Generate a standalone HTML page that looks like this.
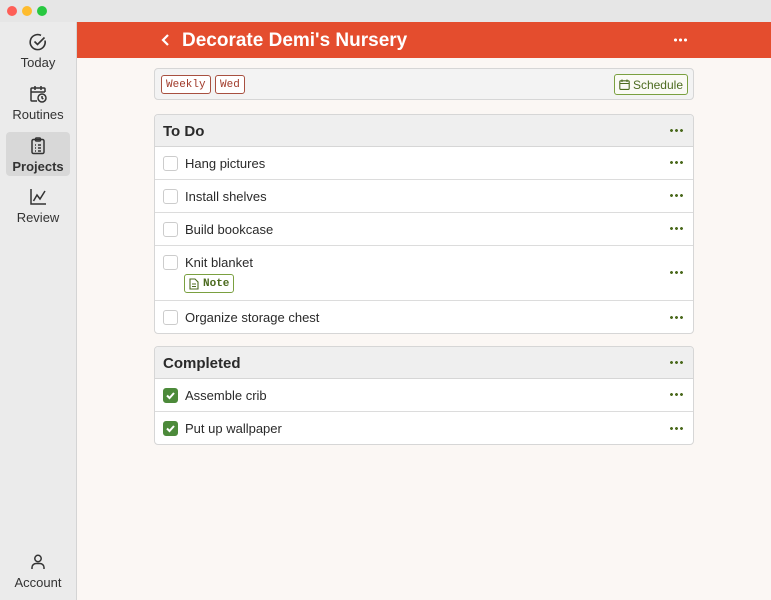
<!DOCTYPE html>
<html><head><meta charset="utf-8"><style>
*{box-sizing:border-box;margin:0;padding:0}
body{width:771px;height:600px;overflow:hidden;font-family:"Liberation Sans",sans-serif;background:#fbf7f4;position:relative;color:#2a2a2a}
.tb{position:absolute;left:0;top:0;width:771px;height:22px;background:#e6e6e6}
.dot{position:absolute;top:6px;width:10px;height:10px;border-radius:50%}
.side{position:absolute;left:0;top:22px;width:77px;height:578px;background:#ebebeb;border-right:1px solid #d4d4d4}
.nav{position:absolute;left:6px;width:64px;height:45px;text-align:center;font-size:13px;color:#333}
.nav svg{display:block;margin:0 auto 3px}
.hdr{position:absolute;left:77px;top:22px;width:694px;height:36px;background:#e44d2e;color:#fff}
.card{position:absolute;left:154px;width:540px;border:1px solid #d6d6d6;border-radius:4px;background:#fff;overflow:hidden}
.ch{height:32px;background:#efefef;border-bottom:1px solid #d6d6d6;font-weight:bold;font-size:15px;padding:8px 0 0 8px;position:relative}
.row{height:33px;border-bottom:1px solid #dcdcdc;position:relative;font-size:13px;padding:9px 0 0 30px}
.row:last-child{border-bottom:none}
.cb{position:absolute;left:8px;top:9px;width:15px;height:15px;border:1px solid #ccc;border-radius:3px;background:#fff}
.cb.on{background:#4c8a3a;border-color:#4c8a3a}
.more{position:absolute;right:10px;top:50%;margin-top:-2px;width:14px;height:3px;background:radial-gradient(circle,#4c6b1f 1.3px,transparent 1.6px) 0 0/5px 3px repeat-x}
.tag{position:absolute;top:6px;height:19px;border:1px solid #a85040;border-radius:3px;color:#a03a2a;font-family:"Liberation Mono",monospace;font-size:11px;padding:3px 4px 0;background:#fff}
</style></head><body>
<div class="tb">
<div class="dot" style="left:7px;background:#fe5f57"></div>
<div class="dot" style="left:22px;background:#febc2e"></div>
<div class="dot" style="left:37px;background:#28c840"></div>
</div>
<div class="side">
<div class="nav" style="top:10px"><svg width="20" height="20" viewBox="0 0 20 20" fill="none" stroke="#333" stroke-width="1.6"><path d="M17 8.5A7.5 7.5 0 1 1 13 3.4"/><path d="M6.5 9.5l3 3 7-7"/></svg>Today</div>
<div class="nav" style="top:62px"><svg width="20" height="20" viewBox="0 0 20 20" fill="none" stroke="#333" stroke-width="1.5"><path d="M9 17H4a1 1 0 0 1-1-1V5a1 1 0 0 1 1-1h12a1 1 0 0 1 1 1v3M3 8h14M7 2v4M13 2v4"/><circle cx="14" cy="14" r="4"/><path d="M14 12v2l1.3 1"/></svg>Routines</div>
<div class="nav" style="top:110px;background:#d8d8d8;border-radius:4px;padding-top:4px;font-weight:bold;height:44px"><svg width="20" height="20" viewBox="0 0 20 20" fill="none" stroke="#333" stroke-width="1.5"><rect x="4" y="3.5" width="12" height="14" rx="1.5"/><rect x="7.5" y="2" width="5" height="3" rx="1"/><path d="M7 9h1M10 9h3M7 12h1M10 12h3M7 15h1M10 15h3"/></svg>Projects</div>
<div class="nav" style="top:165px"><svg width="20" height="20" viewBox="0 0 20 20" fill="none" stroke="#333" stroke-width="1.5"><path d="M3 2v15h15"/><path d="M5.5 14l3.5-6 3 4 5-8"/></svg>Review</div>
<div class="nav" style="top:530px"><svg width="20" height="20" viewBox="0 0 20 20" fill="none" stroke="#333" stroke-width="1.5"><circle cx="10" cy="6.5" r="3.2"/><path d="M4 17v-1.5a4 4 0 0 1 4-4h4a4 4 0 0 1 4 4V17"/></svg>Account</div>
</div>
<div class="hdr">
<svg style="position:absolute;left:83px;top:11px" width="12" height="14" viewBox="0 0 12 14" fill="none" stroke="#fff" stroke-width="2.2"><path d="M8 2L3 7l5 5"/></svg>
<div style="position:absolute;left:105px;top:8px;font-size:19px;font-weight:bold">Decorate Demi's Nursery</div>
<div style="position:absolute;left:596px;top:16px;width:14px;height:4px;background:radial-gradient(circle,#fff 1.4px,transparent 1.7px) 0 0/5px 4px repeat-x"></div>
</div>
<div class="card" style="top:68px;height:32px;background:#f3f3f3">
<div class="tag" style="left:6px">Weekly</div>
<div class="tag" style="left:60px">Wed</div>
<div style="position:absolute;right:5px;top:5px;height:21px;border:1px solid #7aa040;border-radius:3px;color:#4c6b1f;font-size:12px;padding:3px 4px 0 18px;background:#fafaf5">
<svg style="position:absolute;left:4px;top:4px" width="11" height="11" viewBox="0 0 11 11" fill="none" stroke="#4c6b1f" stroke-width="1.1"><rect x="0.8" y="1.8" width="9.4" height="8.6" rx="1"/><path d="M0.8 4.5h9.4M3 0.5v2.5M8 0.5v2.5"/></svg>Schedule</div>
</div>
<div class="card" style="top:114px;height:220px">
<div class="ch">To Do<span class="more"></span></div>
<div class="row"><span class="cb"></span>Hang pictures<span class="more"></span></div>
<div class="row"><span class="cb"></span>Install shelves<span class="more"></span></div>
<div class="row"><span class="cb"></span>Build bookcase<span class="more"></span></div>
<div class="row" style="height:55px"><span class="cb"></span>Knit blanket<span class="more"></span>
<div style="position:absolute;left:29px;top:28px;height:19px;border:1px solid #7aa040;border-radius:3px;color:#4c6b1f;font-family:'Liberation Mono',monospace;font-size:11px;font-weight:bold;padding:3px 4px 0 18px">
<svg style="position:absolute;left:4px;top:3px" width="10" height="12" viewBox="0 0 10 12" fill="none" stroke="#4c6b1f" stroke-width="1.1"><path d="M1 1h5l3 3v7H1z M3 6h4M3 8.5h4"/></svg>Note</div></div>
<div class="row"><span class="cb"></span>Organize storage chest<span class="more"></span></div>
</div>
<div class="card" style="top:346px;height:99px">
<div class="ch">Completed<span class="more"></span></div>
<div class="row"><span class="cb on"><svg width="13" height="13" viewBox="0 0 13 13" fill="none" stroke="#fff" stroke-width="2"><path d="M3 6.5l2.5 2.5 4.5-5"/></svg></span>Assemble crib<span class="more"></span></div>
<div class="row"><span class="cb on"><svg width="13" height="13" viewBox="0 0 13 13" fill="none" stroke="#fff" stroke-width="2"><path d="M3 6.5l2.5 2.5 4.5-5"/></svg></span>Put up wallpaper<span class="more"></span></div>
</div>
</body></html>
